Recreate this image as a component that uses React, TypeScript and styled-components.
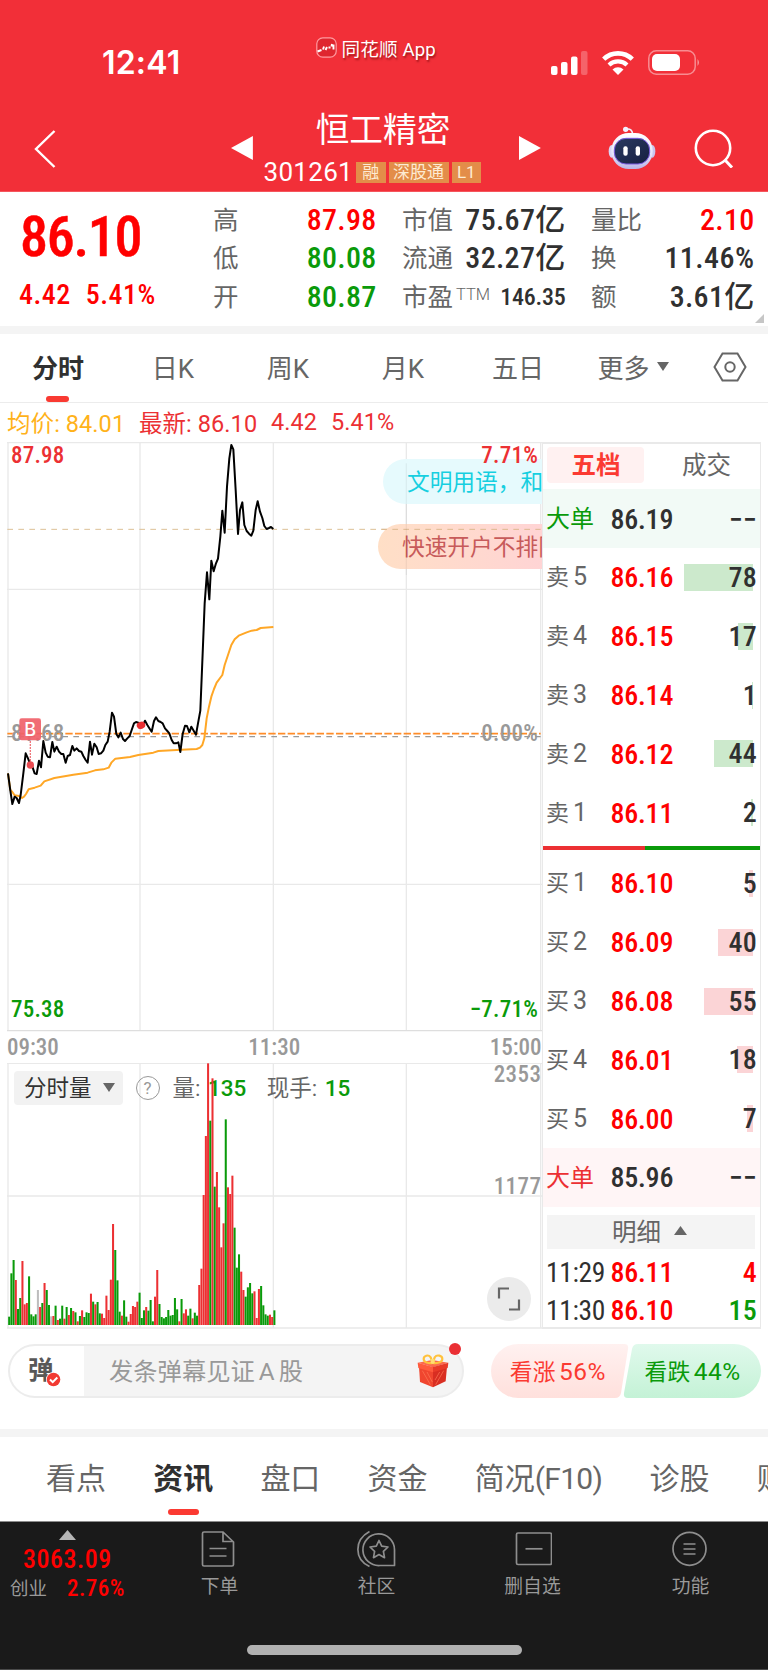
import React from "react";
import styled, { createGlobalStyle, css } from "styled-components";

const RED = "#ff0000";
const GREEN = "#0a9a0a";
const CHART_RED = "#ec3033";
const INK = "#303030";
const MUTED = "#666666";
const GRID = "#e9e9e9";
const FONT = `Roboto, "Noto Sans CJK SC", sans-serif`;

const GlobalStyle = createGlobalStyle`
  * { box-sizing: border-box; }
  body { margin: 0; background: #fff; font-family: ${FONT}; color: ${MUTED}; }
`;

// Narrow digits used for every price, volume and time.
const digits = css`
  font-weight: 500;
  font-stretch: 75%;
  letter-spacing: 0.01em;
`;

const Screen = styled.main`
  width: 768px;
  height: 1670px;
  overflow: hidden;
  isolation: isolate;
  background: #fff;
  display: flex;
  flex-direction: column;
  white-space: nowrap;
`;

/* ---------- header ---------- */

const Header = styled.header`
  height: 192px;
  flex: none;
  background: #f22f38;
  border-bottom: 1px solid #f5565d;
  color: #fff;
`;

const StatusBar = styled.div`
  height: 98px;
  padding: 26px 67px 0 102px;
  display: flex;
  align-items: flex-start;
`;

const Clock = styled.time`
  width: 213.5px;
  margin-top: 20px;
  font: 600 32px/34px Inter, sans-serif;
  letter-spacing: 0.2px;
`;

const Brand = styled.div`
  display: flex;
  align-items: center;
  gap: 5px;
  height: 42px;
  font-size: 18.6px;
  font-weight: 400;
  letter-spacing: 0.15px;
  text-shadow: 1px 2px 2px rgba(90, 0, 0, 0.55);
`;

const StatusIcons = styled.div`
  display: flex;
  align-items: flex-end;
  gap: 14px;
  margin-top: 24px;
  margin-left: auto;
`;

const TitleBar = styled.div`
  height: 93px;
  padding: 0 34px;
  display: flex;
  align-items: flex-start;
`;

const Back = styled.div`
  width: 198px;
  padding-top: 31px;
`;

const Arrow = styled.svg`
  display: block;
  margin-top: 38px;
`;

const Stock = styled.div`
  width: 267px;
  display: flex;
  flex-direction: column;
  align-items: center;
`;

const StockName = styled.h1`
  margin: 10.5px 0 0;
  padding-right: 5.5px;
  font-size: 33.7px;
  line-height: 44px;
  font-weight: 400;
`;

const StockCode = styled.div`
  display: flex;
  align-items: center;
  gap: 3px;
  height: 39.5px;
  margin-right: 27px;
  font-size: 26px;
  line-height: 39.5px;
  letter-spacing: 0.3px;
`;

const Tag = styled.span`
  height: 21px;
  min-width: 29.5px;
  padding: 0 4.5px;
  background: #e38d49;
  color: #fdebd3;
  font-size: 17px;
  line-height: 21px;
  letter-spacing: 0;
  text-align: center;
`;

const HeaderTools = styled.div`
  display: flex;
  align-items: flex-start;
  gap: 38.5px;
  margin-left: 67px;
  padding-top: 28px;
`;

/* ---------- quote ---------- */

const Figure = styled.span<{ $color?: string; $size?: number; $spacing?: number }>`
  ${digits}
  color: ${(p) => p.$color ?? INK};
  font-size: ${(p) => p.$size ?? 30}px;
  letter-spacing: ${(p) => p.$spacing ?? 0.01}em;
`;

const Quote = styled.section`
  position: relative;
  height: 133.5px;
  flex: none;
  display: grid;
  grid-template-columns: 213px 163.5px 25.5px 163.5px 25.5px 163.5px;
  padding-top: 8.5px;
`;

const LastPrice = styled.div`
  padding-left: 19px;
  display: flex;
  flex-direction: column;
  color: ${RED};
`;

const BigPrice = styled.strong`
  ${digits}
  padding-left: 1px;
  font-size: 56px;
  line-height: 73px;
  letter-spacing: -1.3px;
  -webkit-text-stroke: 0.5px ${RED};
`;

const Change = styled.div`
  display: flex;
  gap: 15px;
  line-height: 42px;
`;

const StatColumn = styled.dl`
  margin: 0;
`;

const Stat = styled.div`
  display: flex;
  align-items: center;
  justify-content: space-between;
  height: 38.6px;
  line-height: 38.6px;
  font-size: 25.5px;
`;

const Superscript = styled.sup`
  display: inline-block;
  margin-left: 3px;
  font-size: 16.5px;
  font-weight: 300;
  line-height: 20px;
  vertical-align: 6px;
`;

const Corner = styled.i`
  position: absolute;
  right: 4px;
  bottom: 3px;
  border-left: 9px solid transparent;
  border-bottom: 9px solid #c6c6c6;
`;

const Band = styled.div`
  height: 8px;
  flex: none;
  background: #f4f4f4;
`;

/* ---------- period tabs ---------- */

const PeriodTabs = styled.nav`
  height: 69px;
  flex: none;
  display: grid;
  grid-template-columns: repeat(6, 115px) 78px;
  border-bottom: 1px solid #ececec;
`;

const Period = styled.div<{ $active?: boolean }>`
  position: relative;
  display: flex;
  justify-content: center;
  align-items: center;
  gap: 7px;
  padding: 0 0 2px 1px;
  font-size: 26px;
  color: ${(p) => (p.$active ? INK : MUTED)};
  font-weight: ${(p) => (p.$active ? 700 : 400)};

  &::after {
    content: "";
    display: ${(p) => (p.$active ? "block" : "none")};
    position: absolute;
    left: 46px;
    bottom: 0;
    width: 23px;
    height: 6px;
    border-radius: 3px;
    background: #f93a32;
  }
`;

const InfoLine = styled.div`
  height: 39.5px;
  flex: none;
  padding: 0 0 1px 7px;
  display: flex;
  align-items: center;
  gap: 13.8px;
  font-size: 23.5px;
  color: ${CHART_RED};
  letter-spacing: 0.07px;
`;

const Average = styled.span`
  color: #ffb21a;
`;

/* ---------- charts ---------- */

const Market = styled.section`
  height: 887px;
  flex: none;
  display: flex;
  padding-left: 7px;
`;

const Charts = styled.div`
  width: 535px;
  display: flex;
  flex-direction: column;
`;

const PriceChart = styled.div`
  position: relative;
  height: 590px;
  overflow: hidden;
`;

const ChartLabel = styled.span<{ $top: number; $right?: boolean; $color: string }>`
  ${digits}
  position: absolute;
  top: ${(p) => p.$top}px;
  ${(p) => (p.$right ? "right: 4px;" : "left: 4px;")}
  color: ${(p) => p.$color};
  font-size: 23px;
  line-height: 28px;
`;

const Danmaku = styled.div<{ $top: number; $left: number; $bg: string; $color: string }>`
  position: absolute;
  top: ${(p) => p.$top}px;
  left: ${(p) => p.$left}px;
  width: 240px;
  height: 45px;
  padding-left: 24px;
  border-radius: 23px 0 0 23px;
  background: ${(p) => p.$bg};
  color: ${(p) => p.$color};
  font-size: 22.7px;
  line-height: 48px;
`;

const TimeAxis = styled.div`
  ${digits}
  display: flex;
  justify-content: space-between;
  height: 31px;
  line-height: 31px;
  padding-right: 0.5px;
  font-size: 23px;
  letter-spacing: 0;
  color: #999;
`;

const VolumeChart = styled.div`
  position: relative;
  height: 266px;
`;

const VolumeHead = styled.div`
  position: absolute;
  top: 7.5px;
  left: 7px;
  height: 34px;
  display: flex;
  align-items: center;
  font-size: 22.5px;
  line-height: 32px;
  color: ${MUTED};

  b { font-weight: 500; color: ${GREEN}; margin-left: 7.5px; }
`;

const VolumePicker = styled.div`
  display: flex;
  align-items: center;
  gap: 11px;
  height: 34px;
  padding: 0 8px 0 10px;
  border-radius: 4px;
  background: #f2f2f2;
  color: #333;
`;

const Help = styled.span`
  width: 24px;
  height: 24px;
  margin: 0 13px;
  border: 1.5px solid #999;
  border-radius: 50%;
  color: #999;
  font-size: 17px;
  line-height: 22px;
  text-align: center;
`;

const Current = styled.span`
  margin-left: 20.5px;
`;

const VolumeScale = styled.span<{ $top: number }>`
  ${digits}
  position: absolute;
  right: 0.5px;
  top: ${(p) => p.$top}px;
  font-size: 23px;
  line-height: 24px;
  letter-spacing: 0.02em;
  color: #999;
`;

const Expand = styled.div`
  position: absolute;
  left: 480px;
  top: 214px;
  width: 44px;
  height: 44px;
  border-radius: 50%;
  background: #ebebeb;
`;

/* ---------- order book ---------- */

const Book = styled.aside`
  width: 219px;
  border: 1px solid ${GRID};
  border-bottom: 2px solid ${GRID};
  border-top-width: 2px;
  display: flex;
  flex-direction: column;

  & > * { flex-shrink: 0; }
`;

const BookTabs = styled.div`
  height: 45.3px;
  padding: 3px 4px 0 4px;
  display: flex;
`;

const BookTab = styled.div<{ $active?: boolean }>`
  width: ${(p) => (p.$active ? 99 : 114)}px;
  height: 36px;
  padding-left: ${(p) => (p.$active ? 1 : 13)}px;
  border-radius: 4px;
  text-align: center;
  font-size: 24.5px;
  line-height: 37px;
  font-weight: ${(p) => (p.$active ? 700 : 400)};
  color: ${(p) => (p.$active ? "#fb3a32" : MUTED)};
  background: ${(p) => (p.$active ? "#fff1f1" : "transparent")};
`;

const Level = styled.div<{ $bg?: string; $color?: string }>`
  display: flex;
  align-items: center;
  height: 58.8px;
  padding: 1px 4px 0 3px;
  color: ${(p) => p.$color ?? MUTED};
  background: ${(p) => p.$bg ?? "transparent"};
`;

const LevelName = styled.span<{ $big?: boolean }>`
  width: 64.5px;
  font-size: ${(p) => (p.$big ? 24 : 23)}px;
  line-height: 34px;
`;

const LevelIndex = styled.span`
  margin-left: 4px;
  font-size: 25px;
`;

const LevelVolume = styled.span`
  position: relative;
  flex: 1;
  text-align: right;
  font-size: 28px;
  line-height: 30px;
  margin-right: -1px;
`;

const DepthBar = styled.i<{ $side: "sell" | "buy" }>`
  position: absolute;
  right: 4px;
  top: 1px;
  height: 27px;
  z-index: -1;
  background: ${(p) => (p.$side === "sell" ? "#cce9cc" : "#fbd4d6")};
`;

const Balance = styled.div`
  height: 4px;
  margin: 4px 0;
  background: linear-gradient(90deg, ${CHART_RED} 0 102px, ${GREEN} 102px);
`;

const DetailToggle = styled.div`
  height: 34px;
  margin: 8px 5px 6px 4px;
  padding: 0 3px 2px 0;
  display: flex;
  align-items: center;
  justify-content: center;
  gap: 13px;
  background: #f4f4f4;
  font-size: 24.5px;
`;

const Trade = styled.div`
  height: 34px;
  margin-bottom: 4.3px;
  padding: 1px 4px 0 3px;
  display: flex;
  align-items: center;

  &:last-child { margin-bottom: 0; }
`;

const TradeTime = styled.span`
  ${digits}
  width: 64.5px;
  color: ${INK};
  font-size: 27.5px;
  font-weight: 400;
  letter-spacing: -0.012em;
`;

const TradeVolume = styled.span`
  flex: 1;
  text-align: right;
  margin-right: -1px;
`;

/* ---------- comment bar ---------- */

const CommentBar = styled.section`
  height: 100px;
  flex: none;
  padding: 15px 8px 0;
  display: flex;
  justify-content: space-between;
`;

const CommentInput = styled.div`
  position: relative;
  width: 456px;
  height: 54px;
  border: 2px solid #ececec;
  border-radius: 27px;
  background: linear-gradient(90deg, #fff 0 74px, #f4f4f4 74px);
  display: flex;
  align-items: center;
  color: #999;
  font-size: 24.3px;
`;

const DanmakuToggle = styled.div`
  position: relative;
  width: 74px;
  padding: 0 0 7px 18px;
  font-size: 25.5px;
  font-weight: 700;
  color: #585858;
`;

const ToggleCheck = styled.svg`
  position: absolute;
  left: 36px;
  bottom: 6px;
`;

const Placeholder = styled.span`
  flex: 1;
  padding: 0 0 3px 25px;
  word-spacing: -2px;
`;

const GiftIcon = styled.svg`
  margin-right: 13px;
`;

const Dot = styled.i`
  position: absolute;
  right: 1px;
  top: -3px;
  width: 12px;
  height: 12px;
  border-radius: 50%;
  background: #ea2f34;
`;

const Vote = styled.div`
  position: relative;
  width: 269.5px;
  height: 54px;
  display: flex;

  svg { position: absolute; inset: 0; z-index: -1; }
`;

const VoteSide = styled.span<{ $color: string }>`
  width: 135px;
  line-height: 55px;
  text-align: center;
  color: ${(p) => p.$color};
  font-size: 22.8px;
  em { font-style: normal; font-size: 24.5px; margin-left: 3.5px; letter-spacing: 0.5px; }
`;

/* ---------- section tabs + bottom nav ---------- */

const SectionTabs = styled.nav`
  height: 84px;
  flex: none;
  padding-left: 46px;
  display: flex;
  gap: 47.2px;
  overflow: hidden;
`;

const SectionTab = styled.div<{ $active?: boolean }>`
  position: relative;
  flex: none;
  font-size: 30px;
  line-height: 84px;
  color: ${(p) => (p.$active ? INK : MUTED)};
  font-weight: ${(p) => (p.$active ? 700 : 400)};

  &::after {
    content: "";
    display: ${(p) => (p.$active ? "block" : "none")};
    position: absolute;
    left: 15px;
    bottom: 6px;
    width: 31px;
    height: 6px;
    border-radius: 3px;
    background: #fb3a32;
  }
`;

const Latin = styled.span`
  letter-spacing: -0.7px;
`;

const BottomNav = styled.footer`
  position: relative;
  flex: 1;
  background: #1a1a1a;
  border-top: 1px solid #8c8c8c;
  border-bottom: 1px solid #4a4a4a;
  display: grid;
  grid-template-columns: 140px repeat(4, 157px);
  color: #999;
`;

const IndexCell = styled.div`
  padding: 8px 0 0 10px;
  display: flex;
  flex-direction: column;
`;

const IndexArrow = styled.svg`
  margin-left: 48.5px;
`;

const IndexValue = styled.span`
  ${digits}
  margin: 3px 0 0 13px;
  color: ${RED};
  font-size: 26px;
  line-height: 32px;
  letter-spacing: 0.02em;
`;

const IndexRow = styled.div`
  display: flex;
  gap: 20px;
  align-items: center;
  line-height: 28px;
  font-size: 18.5px;
`;

const IndexPct = styled.span`
  ${digits}
  color: ${RED};
  font-size: 23px;
  letter-spacing: 0.02em;
`;

const NavItem = styled.div`
  display: flex;
  flex-direction: column;
  align-items: center;
  padding-top: 8px;
  font-size: 18.8px;
  line-height: 26px;

  svg { display: block; margin-bottom: 5.5px; }
`;

const NavLabel = styled.span`
  padding-left: 2px;
`;

const HomeIndicator = styled.i`
  position: absolute;
  left: 247px;
  bottom: 14px;
  width: 275px;
  height: 10px;
  border-radius: 5px;
  background: #b1b1b1;
`;

/* ---------- data ---------- */

type Tone = "r" | "g" | "n";
// One entry per minute: bar height in chart units followed by its tone.
const VOLUME =
  "25g 155g 195g 135r 48g 81g 192r 62r 66r 146g 32g 26g 32g 105n 54r 66g 126r 105g 60g 26n 27r 58g 15r 19g 58g 19r 54g 30r 51g 42r 38g 11r 27g 44r 24g 38g 36g 94r 70g 62r 69g 35g 34r 21r 88r 45r 136r 303r 225g 134g 40g 28r 74g 25g 10r 33r 57r 54r 70r 97g 21g 44g 54r 43g 75g 11g 85r 165r 63g 24g 20g 24g 45g 28g 30g 81g 47g 11r 78g 35r 47r 28g 49g 20r 37g 28g 120r 169r 390r 567r 785r 613g 740r 415g 459r 353r 233r 305r 617g 413r 393r 448r 292g 172g 212g 160r 105r 85g 113g 126g 95g 101r 21r 108r 117g 59g 32g 28g 31r 24r 44g";

const volumeBars = VOLUME.split(" ").map((v) => ({
  height: parseInt(v, 10),
  tone: v.slice(-1) as Tone,
}));

const toneColor: Record<Tone, string> = { r: CHART_RED, g: GREEN, n: "#bdbdbd" };

const PRICE_LINE =
  "24,1030 31,1082 37,1122 44,1100 50,1104 57,1119 62,1095 70,1030 77,970 84,985 91,1003 97,1010 104,1030 110,1032 117,992 123,1012 130,933 137,968 143,980 150,982 157,936 163,965 170,950 177,965 184,972 190,972 197,998 203,978 210,975 217,948 223,962 230,955 237,963 244,965 250,978 257,990 263,998 270,935 276,974 283,941 290,952 296,972 303,970 310,962 316,945 323,935 329,905 336,848 342,860 349,912 355,922 362,908 369,927 375,933 382,925 389,918 395,900 402,880 408,876 415,878 422,885 428,888 435,872 442,885 449,896 455,905 462,873 468,862 475,873 482,876 488,880 495,895 502,903 508,910 515,930 521,940 528,940 535,937 541,966 548,912 555,887 561,888 568,907 574,890 581,902 588,914 594,880 601,842 608,670 614,520 621,427 628,508 634,392 641,424 648,400 654,386 661,320 667,242 674,308 681,170 688,85 694,45 700,58 707,180 714,312 720,240 727,217 733,285 740,303 747,311 754,317 760,302 767,240 773,214 780,245 787,264 793,288 800,297 807,294 813,291 820,297";

const AVERAGE_LINE =
  "24,1030 31,1080 37,1086 44,1096 57,1098 66,1104 72,1100 78,1092 86,1078 104,1073 122,1067 133,1054 163,1044 220,1034 263,1028 285,1021 310,1018 326,1013 334,998 346,986 390,981 415,975 460,968 475,963 530,960 590,957 600,953 607,945 613,925 620,865 627,830 634,800 642,777 650,758 667,735 674,705 684,675 694,645 704,628 716,617 740,607 755,602 770,600 782,594 820,591";

type LevelData = { side: string; index: number; price: string; volume: number };

const SELLS: LevelData[] = [
  { side: "卖", index: 5, price: "86.16", volume: 78 },
  { side: "卖", index: 4, price: "86.15", volume: 17 },
  { side: "卖", index: 3, price: "86.14", volume: 1 },
  { side: "卖", index: 2, price: "86.12", volume: 44 },
  { side: "卖", index: 1, price: "86.11", volume: 2 },
];

const BUYS: LevelData[] = [
  { side: "买", index: 1, price: "86.10", volume: 5 },
  { side: "买", index: 2, price: "86.09", volume: 40 },
  { side: "买", index: 3, price: "86.08", volume: 55 },
  { side: "买", index: 4, price: "86.01", volume: 18 },
  { side: "买", index: 5, price: "86.00", volume: 7 },
];

/* ---------- parts ---------- */

function Triangle({ w, h, up, color = MUTED }: { w: number; h: number; up?: boolean; color?: string }) {
  return (
    <svg width={w} height={h} viewBox="0 0 12 10" preserveAspectRatio="none">
      <path d={up ? "M6 0 12 10H0z" : "M0 0h12L6 10z"} fill={color} />
    </svg>
  );
}

function Robot() {
  return (
    <svg width="48" height="44" viewBox="0 0 144 132">
      <defs>
        <linearGradient id="shell" x1="0" y1="0" x2="0" y2="1">
          <stop offset="0" stopColor="#fff" />
          <stop offset="0.6" stopColor="#e4e2f8" />
          <stop offset="1" stopColor="#b9b4e6" />
        </linearGradient>
        <linearGradient id="visor" x1="0" y1="0" x2="1" y2="1">
          <stop offset="0" stopColor="#2a3a60" />
          <stop offset="1" stopColor="#161f42" />
        </linearGradient>
      </defs>
      <path d="M56 9c12-1 17 4 18 16" fill="none" stroke="#f0eefc" strokeWidth="5" />
      <circle cx="53" cy="10" r="8" fill="#f3f1ff" />
      <ellipse cx="11" cy="76" rx="9" ry="19" fill="#d8d5f5" />
      <ellipse cx="133" cy="76" rx="9" ry="19" fill="#c9c5ee" />
      <rect x="10" y="21" width="124" height="108" rx="52" fill="url(#shell)" />
      <rect x="19" y="37" width="106" height="77" rx="35" fill="url(#visor)" stroke="#7a5ae0" strokeWidth="3" />
      <rect x="46" y="61" width="13" height="28" rx="6" fill="#fff" />
      <rect x="83" y="61" width="13" height="28" rx="6" fill="#fff" />
    </svg>
  );
}

function AppHeader() {
  return (
    <Header>
      <StatusBar>
        <Clock>12:41</Clock>
        <Brand>
          <svg width="21" height="21" viewBox="0 0 21 21">
            <rect x="0.8" y="0.8" width="19.4" height="19.4" rx="6" fill="#df262f" stroke="#ff9ba0" strokeWidth="1.2" />
            <path d="M1.500 14.500l4-1.500M7 12.500l1-3M9.500 13l1.500-3M12.500 10.500l2 0M15.500 9.500l.5-2.500M17.500 7.500v5" fill="none" stroke="#fff" strokeWidth="1.900" />
          </svg>
          同花顺 App
        </Brand>
        <StatusIcons>
          <svg width="37" height="24" viewBox="0 0 37 24">
            <rect x="0" y="15" width="6.500" height="9" rx="2" fill="#fff" />
            <rect x="10" y="11" width="6.500" height="13" rx="2" fill="#fff" />
            <rect x="20" y="5.500" width="6.500" height="18.500" rx="2" fill="#fff" />
            <rect x="30" y="0" width="6.500" height="24" rx="2" fill="#fff" opacity=".25" />
          </svg>
          <svg width="32" height="24" viewBox="0 0 32 24" fill="none" stroke="#fff">
            <path d="M1.700 8.200a20.500 20.500 0 0 1 28.600 0" strokeWidth="4.600" />
            <path d="M7 14a13 13 0 0 1 18 0" strokeWidth="4.200" />
            <path d="M16 24l-5.500-5.600a8 8 0 0 1 11 0z" fill="#fff" stroke="none" />
          </svg>
          <svg width="53" height="25" viewBox="0 0 53 25">
            <rect x="0.800" y="0.800" width="46.400" height="23.400" rx="7.500" fill="none" stroke="#fff" strokeOpacity=".45" strokeWidth="1.500" />
            <rect x="4" y="4" width="28" height="17" rx="5" fill="#fff" />
            <path d="M49.500 9q3 3.500 0 7z" fill="#fff" opacity=".5" />
          </svg>
        </StatusIcons>
      </StatusBar>
      <TitleBar>
        <Back>
          <svg width="23" height="40" viewBox="0 0 23 40">
            <path d="M20.500 2 2 20l18.500 18" fill="none" stroke="#fff" strokeWidth="2.400" />
          </svg>
        </Back>
        <Arrow width="22" height="24" viewBox="0 0 22 24">
          <path d="M0 12 22 0v24z" fill="#fff" />
        </Arrow>
        <Stock>
          <StockName>恒工精密</StockName>
          <StockCode>
            301261<Tag>融</Tag>
            <Tag>深股通</Tag>
            <Tag>L1</Tag>
          </StockCode>
        </Stock>
        <Arrow width="22" height="24" viewBox="0 0 22 24">
          <path d="M22 12 0 0v24z" fill="#fff" />
        </Arrow>
        <HeaderTools>
          <Robot />
          <svg width="40" height="42" viewBox="0 0 40 42" fill="none" stroke="#fff" strokeWidth="2.600">
            <circle cx="19" cy="22" r="17.200" />
            <path d="M31 34l7 7.500" strokeWidth="3" />
          </svg>
        </HeaderTools>
      </TitleBar>
    </Header>
  );
}

function QuotePanel() {
  return (
    <Quote>
      <LastPrice>
        <BigPrice>86.10</BigPrice>
        <Change>
          <Figure $color={RED} $size={28} $spacing={0.018}>4.42</Figure>
          <Figure $color={RED} $size={28} $spacing={0.018}>5.41%</Figure>
        </Change>
      </LastPrice>
      <StatColumn>
        <Stat>高<Figure $color={RED}>87.98</Figure></Stat>
        <Stat>低<Figure $color={GREEN}>80.08</Figure></Stat>
        <Stat>开<Figure $color={GREEN}>80.87</Figure></Stat>
      </StatColumn>
      <span />
      <StatColumn>
        <Stat>市值<Figure>75.67亿</Figure></Stat>
        <Stat>流通<Figure>32.27亿</Figure></Stat>
        <Stat><span>市盈<Superscript>TTM</Superscript></span><Figure $size={24} $spacing={-0.01}>146.35</Figure></Stat>
      </StatColumn>
      <span />
      <StatColumn>
        <Stat>量比<Figure $color={RED}>2.10</Figure></Stat>
        <Stat>换<Figure $spacing={0.015}>11.46%</Figure></Stat>
        <Stat>额<Figure>3.61亿</Figure></Stat>
      </StatColumn>
      <Corner />
    </Quote>
  );
}

const Overlay = styled.svg`
  position: absolute;
  inset: 0;
`;

function PriceSection() {
  return (
    <PriceChart>
      {/* chart space: three units per pixel */}
      <svg width="535" height="590" viewBox="21 36 1605 1770" fill="none">
        <g stroke={GRID} strokeWidth="4">
          <path d="M24 37V1803M420 37V1803M820 37V1803M1219 37V1803M1622 37V1803M21 38H1626M21 478H1626M21 1363H1626" />
          <path d="M21 1802H1626" stroke="#dedede" />
        </g>
        <path d="M22 298H1622" stroke="#dcc096" strokeWidth="3" strokeDasharray="17 16" />
        <path d="M22 920H1622" stroke="#999" strokeWidth="4" strokeDasharray="17 16" />
        <path d="M22 911H1622" stroke="#ff8c28" strokeWidth="5" strokeDasharray="22 7" />
        <polyline points={AVERAGE_LINE} stroke="#ffa726" strokeWidth="6" strokeLinejoin="round" />
        <polyline points={PRICE_LINE} stroke="#000" strokeWidth="6" strokeLinejoin="round" />
      </svg>
      <ChartLabel $top={0} $color={CHART_RED}>87.98</ChartLabel>
      <ChartLabel $top={278} $color="#999">81.68</ChartLabel>
      <ChartLabel $top={554} $color={GREEN}>75.38</ChartLabel>
      <Danmaku $top={17} $left={376} $bg="#e6fafd" $color="#16cfe0">文明用语，和谐讨论</Danmaku>
      <Danmaku $top={82} $left={371} $bg="linear-gradient(90deg,#ffdfc6,#ffd3d6 75%)" $color="#c75a5a">快速开户不排队</Danmaku>
      <ChartLabel $top={0} $right $color={CHART_RED}>7.71%</ChartLabel>
      <ChartLabel $top={278} $right $color="#999">0.00%</ChartLabel>
      <ChartLabel $top={554} $right $color={GREEN}>−7.71%</ChartLabel>
      <Overlay width="535" height="590" viewBox="21 36 1605 1770" fill="none">
        <path d="M1129 298H1622" stroke="#dcb98e" strokeWidth="3" strokeDasharray="17 16" strokeDashoffset="18" />
        <path d="M1219 100V435" stroke="#000" strokeOpacity=".05" strokeWidth="4" />
        <ellipse cx="423" cy="886" rx="13" ry="11" fill="#ea2f33" transform="rotate(-20 423 886)" />
        <path d="M91 934V1000" stroke="#ea4b52" strokeWidth="4" strokeDasharray="4 5" />
        <circle cx="91" cy="1005" r="11" fill="#ea4b52" />
        <rect x="58" y="865" width="65" height="66" rx="7" fill="#f0626a" fillOpacity=".93" />
        <text x="90.500" y="918" fill="#fff" fontFamily="Inter, sans-serif" fontWeight="500" fontSize="54" textAnchor="middle">B</text>
      </Overlay>
    </PriceChart>
  );
}

function VolumeSection() {
  return (
    <VolumeChart>
      <svg width="535" height="266" viewBox="21 189 1605 798" fill="none">
        <g stroke={GRID} strokeWidth="4">
          <path d="M24 190V984M420 190V984M820 190V984M1219 190V984M1622 190V984M21 190H1626M21 588H1626" />
          <path d="M21 984H1626" strokeWidth="5" />
        </g>
      </svg>
      <VolumeHead>
        <VolumePicker>分时量 <Triangle w={12} h={9} /></VolumePicker>
        <Help>?</Help>
        <span>量:<b>135</b></span>
        <Current>现手:<b>15</b></Current>
      </VolumeHead>
      <Overlay width="535" height="266" viewBox="21 189 1605 798">
        {volumeBars.map((bar, i) => (
          <rect key={i} x={24.5 + i * 6.63} y={975 - bar.height} width="6.1" height={bar.height} fill={toneColor[bar.tone]} />
        ))}
      </Overlay>
      <VolumeScale $top={0}>2353</VolumeScale>
      <VolumeScale $top={112}>1177</VolumeScale>
      <Expand>
        <svg width="44" height="44" viewBox="0 0 44 44" fill="none" stroke="#666" strokeWidth="2.200">
          <path d="M12 21.500v-10h10M32 22.500v10H22" />
        </svg>
      </Expand>
    </VolumeChart>
  );
}

function LevelRow({ row, tone }: { row: LevelData; tone: "sell" | "buy" }) {
  return (
    <Level>
      <LevelName>{row.side}<LevelIndex>{row.index}</LevelIndex></LevelName>
      <Figure $color={RED} $size={28} $spacing={-0.008}>{row.price}</Figure>
      <LevelVolume>
        <DepthBar $side={tone} style={{ width: Math.max(1, Math.round(row.volume * 0.885)) }} />
        <Figure $size={28}>{row.volume}</Figure>
      </LevelVolume>
    </Level>
  );
}

function OrderBook() {
  return (
    <Book>
      <BookTabs>
        <BookTab $active>五档</BookTab>
        <BookTab>成交</BookTab>
      </BookTabs>
      <Level $bg="#f2faf6" $color={GREEN}>
        <LevelName $big>大单</LevelName>
        <Figure $size={28} $spacing={-0.008}>86.19</Figure>
        <TradeVolume><Figure $size={28}>−−</Figure></TradeVolume>
      </Level>
      {SELLS.map((row) => <LevelRow key={row.price} row={row} tone="sell" />)}
      <Balance />
      {BUYS.map((row) => <LevelRow key={row.price} row={row} tone="buy" />)}
      <Level $bg="#fff5f6" $color={CHART_RED}>
        <LevelName $big>大单</LevelName>
        <Figure $size={28} $spacing={-0.008}>85.96</Figure>
        <TradeVolume><Figure $size={28}>−−</Figure></TradeVolume>
      </Level>
      <DetailToggle>明细 <Triangle w={13} h={9} up /></DetailToggle>
      <Trade>
        <TradeTime>11:29</TradeTime>
        <Figure $color={RED} $size={28} $spacing={-0.008}>86.11</Figure>
        <TradeVolume><Figure $color={RED} $size={28}>4</Figure></TradeVolume>
      </Trade>
      <Trade>
        <TradeTime>11:30</TradeTime>
        <Figure $color={RED} $size={28} $spacing={-0.008}>86.10</Figure>
        <TradeVolume><Figure $color={GREEN} $size={28}>15</Figure></TradeVolume>
      </Trade>
    </Book>
  );
}

function Comments() {
  return (
    <CommentBar>
      <CommentInput>
        <DanmakuToggle>
          弹
          <ToggleCheck width="15" height="15" viewBox="0 0 15 15">
            <circle cx="7.500" cy="7.500" r="7.500" fill="#fff" />
            <circle cx="7.500" cy="7.500" r="6.800" fill="#f23a32" />
            <path d="M4 7.500l2.700 2.600L11.300 5.500" fill="none" stroke="#fff" strokeWidth="2" />
          </ToggleCheck>
        </DanmakuToggle>
        <Placeholder>发条弹幕见证 A 股</Placeholder>
        <GiftIcon width="32" height="34" viewBox="0 0 96 102">
          <path d="M6 38 48 50v50L9 84z" fill="#f0462f" />
          <path d="M90 38 48 50v50L86 82z" fill="#d92e22" />
          <path d="M2 26 46 18l48 8-46 14z" fill="#fb6a4e" />
          <path d="M2 26l46 13v16L4 42z" fill="#ff5a3c" />
          <path d="M94 26 48 39v16l44-13z" fill="#e83a28" />
          <path d="M16 50 40 92M30 54l16 30M80 50 56 92M68 54 54 78" stroke="#ff7c58" strokeWidth="3" opacity=".65" />
          <path d="M46 27C36 29 20 25 20 15S34 0 41 10l6 17zM48 27c10 2 28-2 28-12S60 0 53 10z" fill="none" stroke="#ffc23d" strokeWidth="6.500" />
          <rect x="41" y="15" width="12" height="14" rx="4" fill="#ffdf73" />
        </GiftIcon>
        <Dot />
      </CommentInput>
      <Vote>
        <svg width="270" height="54" viewBox="0 0 270 54">
          <defs>
            <linearGradient id="up" x1="0" y1="0" x2="0" y2="1">
              <stop offset="0" stopColor="#fff1f0" />
              <stop offset="1" stopColor="#ffe0dc" />
            </linearGradient>
            <linearGradient id="down" x1="0" y1="0" x2="0" y2="1">
              <stop offset="0" stopColor="#e0f9ec" />
              <stop offset="1" stopColor="#c4f2d6" />
            </linearGradient>
          </defs>
          <path d="M27 0H133q5 0 4 5l-7 44q-1 5-6 5H27a27 27 0 0 1 0-54z" fill="url(#up)" />
          <path d="M147 0h96a27 27 0 0 1 0 54H137q-5 0-4-5l8-44q1-5 6-5z" fill="url(#down)" />
        </svg>
        <VoteSide $color="#fb3a32">看涨<em>56%</em></VoteSide>
        <VoteSide $color={GREEN}>看跌<em>44%</em></VoteSide>
      </Vote>
    </CommentBar>
  );
}

function Footer() {
  return (
    <BottomNav>
      <IndexCell>
        <IndexArrow width="17" height="10" viewBox="0 0 17 10">
          <path d="M8.500 0 17 10H0z" fill="#b5b5b5" />
        </IndexArrow>
        <IndexValue>3063.09</IndexValue>
        <IndexRow>创业<IndexPct>2.76%</IndexPct></IndexRow>
      </IndexCell>
      <NavItem>
        <svg width="36" height="38" viewBox="0 0 36 38" fill="none" stroke="#8e8e8e" strokeWidth="1.700">
          <path d="M22 2H3q-1.500 0-1.500 1.500v31q0 1.500 1.500 1.500h28q1.500 0 1.500-1.500V12zv9.500h10M8.500 18.500h17M8.500 26h17" />
        </svg>
        <NavLabel>下单</NavLabel>
      </NavItem>
      <NavItem>
        <svg width="40" height="38" viewBox="0 0 40 38" fill="none" stroke="#8e8e8e" strokeWidth="1.700">
          <path d="M13.500 1.500C-2 10-2 29 13.500 36.500M38.500 35.500H24a15.800 15.800 0 1 1 14.500-15.800zM23 10.500l2.700 5.700 6.300.8-4.600 4.400 1.100 6.300-5.500-3.100-5.500 3.100 1.100-6.300L14 17l6.300-.8z" strokeLinejoin="round" />
        </svg>
        <NavLabel>社区</NavLabel>
      </NavItem>
      <NavItem>
        <svg width="38" height="38" viewBox="0 0 38 38" fill="none" stroke="#8e8e8e" strokeWidth="1.700">
          <rect x="2.500" y="3" width="35" height="31.500" rx="1.500" />
          <path d="M11.500 18.800h17" />
        </svg>
        删自选
      </NavItem>
      <NavItem>
        <svg width="38" height="38" viewBox="0 0 38 38" fill="none" stroke="#8e8e8e" strokeWidth="1.700">
          <circle cx="18.500" cy="18.800" r="16.500" />
          <path d="M12.500 14h12M12.500 19h12M12.500 24h12" />
        </svg>
        <NavLabel>功能</NavLabel>
      </NavItem>
      <HomeIndicator />
    </BottomNav>
  );
}

export default function App() {
  return (
    <Screen>
      <GlobalStyle />
      <AppHeader />
      <QuotePanel />
      <Band />
      <PeriodTabs>
        <Period $active>分时</Period>
        <Period>日K</Period>
        <Period>周K</Period>
        <Period>月K</Period>
        <Period>五日</Period>
        <Period>更多<Triangle w={12} h={9} /></Period>
        <Period>
          <svg width="34" height="30" viewBox="0 0 34 30" fill="none" stroke={MUTED} strokeWidth="2">
            <path d="M9.500 1.500h15L32.500 15l-8 13.500h-15L1.500 15z" />
            <circle cx="17" cy="15" r="4.700" />
          </svg>
        </Period>
      </PeriodTabs>
      <InfoLine>
        <Average>均价: 84.01</Average>
        <span>最新: 86.10</span>
        <span>4.42</span>
        <span>5.41%</span>
      </InfoLine>
      <Market>
        <Charts>
          <PriceSection />
          <TimeAxis>
            <span>09:30</span>
            <span>11:30</span>
            <span>15:00</span>
          </TimeAxis>
          <VolumeSection />
        </Charts>
        <OrderBook />
      </Market>
      <Comments />
      <Band />
      <SectionTabs>
        <SectionTab>看点</SectionTab>
        <SectionTab $active>资讯</SectionTab>
        <SectionTab>盘口</SectionTab>
        <SectionTab>资金</SectionTab>
        <SectionTab>简况<Latin>(F10)</Latin></SectionTab>
        <SectionTab>诊股</SectionTab>
        <SectionTab>财务</SectionTab>
      </SectionTabs>
      <Footer />
    </Screen>
  );
}
